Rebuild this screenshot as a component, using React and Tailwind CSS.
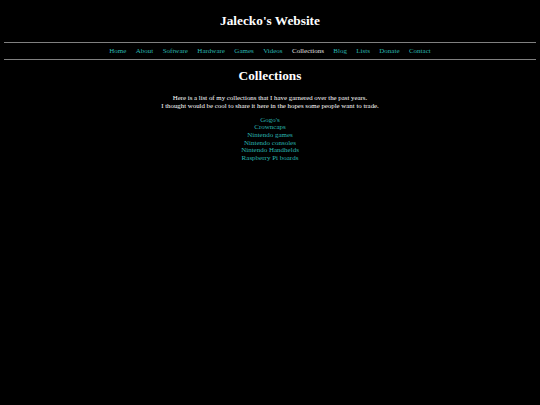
export default function App() {
  const nav = ["Home", "About", "Software", "Hardware", "Games", "Videos", "Collections", "Blog", "Lists", "Donate", "Contact"];
  const items = ["Gogo's", "Crowncaps", "Nintendo games", "Nintendo consoles", "Nintendo Handhelds", "Raspberry Pi boards"];
  return (
    <div className="min-h-[405px] bg-black px-[4px] text-white" style={{ fontFamily: '"Liberation Serif", serif' }}>
      <h1 className="pt-[13px] pb-[13px] text-center text-[13.3px] font-bold leading-[16px]">Jalecko's Website</h1>
      <hr className="border-t border-[#808080]" />
      <nav className="flex h-[16px] items-center justify-center gap-[9.4px] text-[7px] leading-[8px]">
        {nav.map((n) =>
          n === "Collections" ? (
            <span key={n} className="text-[#e0e0e0]">{n}</span>
          ) : (
            <a key={n} className="text-[#2ab7b2]">{n}</a>
          )
        )}
      </nav>
      <hr className="border-t border-[#808080]" />
      <h2 className="pt-[8px] text-center text-[13.3px] font-bold leading-[16px]">Collections</h2>
      <p className="pt-[10px] text-center text-[6.85px] leading-[7.6px]">
        Here is a list of my collections that I have garnered over the past years.
        <br />
        I thought would be cool to share it here in the hopes some people want to trade.
      </p>
      <ul className="pt-[7.6px] text-center text-[7px] leading-[7.6px] text-[#2ab7b2]">
        {items.map((i) => (
          <li key={i}>
            <a>{i}</a>
          </li>
        ))}
      </ul>
    </div>
  );
}
